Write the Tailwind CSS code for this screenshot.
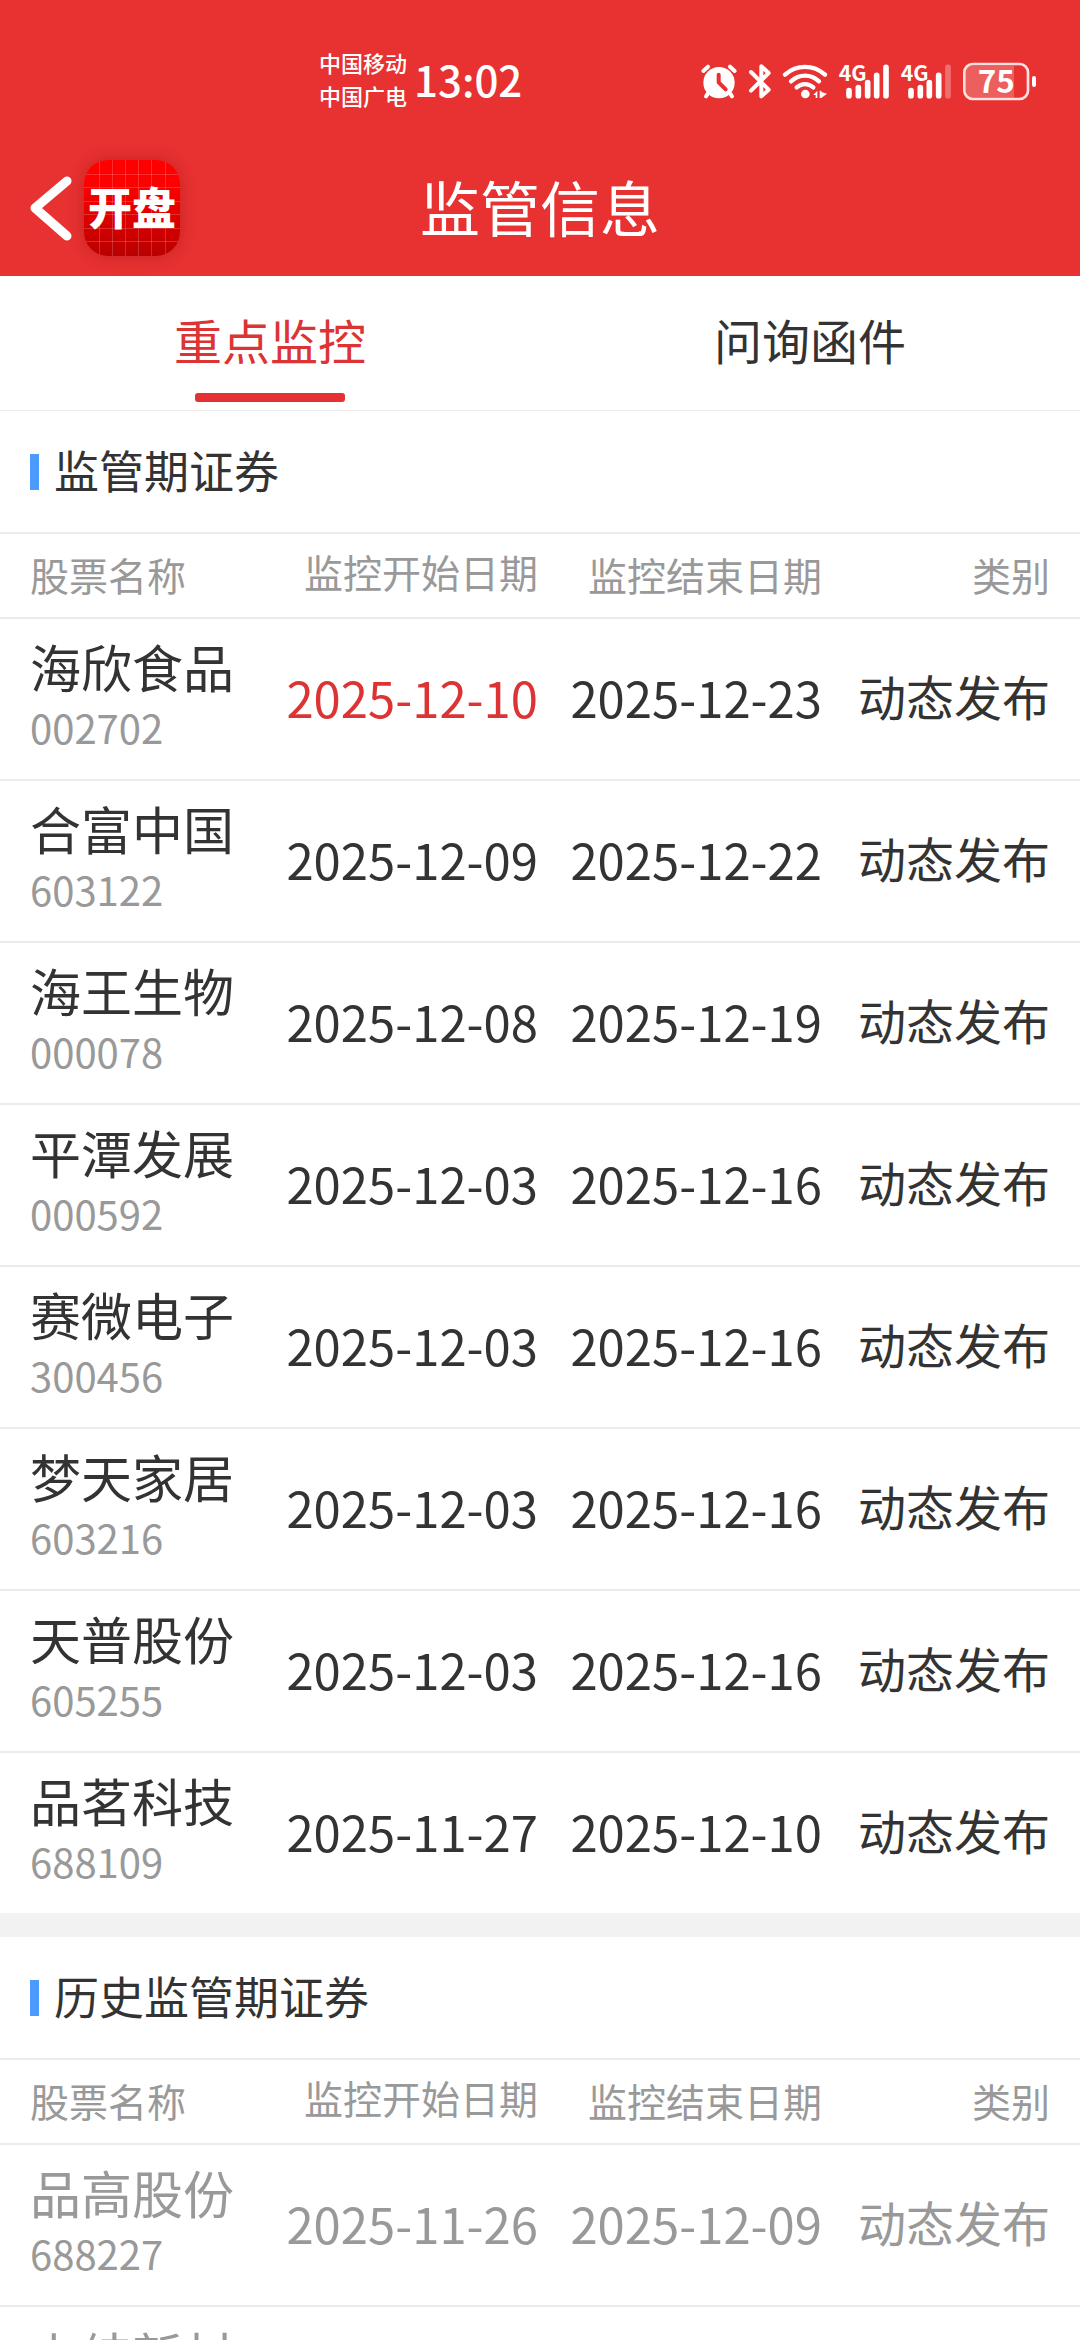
<!DOCTYPE html>
<html lang="zh-CN">
<head>
    <meta charset="UTF-8">
    <meta name="viewport" content="width=device-width, initial-scale=1.0">
    <title>监管信息</title>
    <script src="https://cdn.jsdelivr.net/npm/@tailwindcss/browser@4"></script>
</head>
<body class="bg-white text-[#333333] font-['Noto_Sans_CJK_SC',sans-serif]">
<div class="h-screen flex flex-col overflow-hidden">

    <header class="bg-[#e83131] text-white shrink-0">
        <!-- Status bar -->
        <div class="h-[140px] pt-[22px] pl-[319px] pr-[43px] flex items-center justify-between">
            <div class="flex items-center gap-[7px]">
                <div class="text-[22px] leading-[33px] font-medium pb-1">
                    <p>中国移动</p>
                    <p>中国广电</p>
                </div>
                <span class="text-[42px] leading-[50px] font-medium pb-1">13:02</span>
            </div>
            <div class="flex items-center gap-[10px]">
                <!-- Alarm -->
                <svg class="w-[38px] h-[40px]" viewBox="60 60 114 120" fill="none" stroke="#fff" stroke-linecap="round" stroke-linejoin="round">
                    <circle cx="117" cy="125" r="47" fill="#fff" stroke="none"/>
                    <path d="M70 90 84 77M164 90 150 77" stroke-width="12"/>
                    <path d="M84 157 78 166M150 157 156 166" stroke-width="12"/>
                    <path d="M116 101V124L137 145" stroke="#e83131" stroke-width="12"/>
                </svg>
                <!-- Bluetooth -->
                <svg class="w-[24px] h-[40px]" viewBox="204 60 72 120" fill="none" stroke="#fff" stroke-width="12" stroke-linecap="round" stroke-linejoin="round">
                    <path d="M213 93 266 146 244 166V76L266 96 213 149"/>
                </svg>
                <!-- Wifi -->
                <svg class="w-[46px] h-[40px]" viewBox="306 60 138 120" fill="none" stroke="#fff" stroke-width="13" stroke-linecap="round">
                    <path d="M315 101C350 70 400 70 435 101"/>
                    <path d="M333 121C358 98 392 98 417 121"/>
                    <path d="M350 139C365 126 385 126 400 139"/>
                    <circle cx="376" cy="159" r="13" fill="#fff" stroke="none"/>
                    <path d="M400 162 412 149V171H407V162ZM419 149H424V153L441 158 424 171H419Z" fill="#fff" stroke="none"/>
                </svg>
                <!-- Signal 1 -->
                <svg class="w-[52px] h-[40px] overflow-visible" viewBox="474 60 156 120" fill="none" stroke="#fff" stroke-width="17" stroke-linecap="round">
                    <text class="font-['Liberation_Sans_Narrow','Noto_Sans_CJK_SC',sans-serif]" x="476" y="121" font-size="64" font-weight="600" fill="#fff" stroke="none">4G</text>
                    <path d="M507 149V164M535 140V164M563 125V164M590 103V164M618 79V164"/>
                </svg>
                <!-- Signal 2, last bar off -->
                <svg class="w-[52px] h-[40px] overflow-visible" viewBox="660 60 156 120" fill="none" stroke="#fff" stroke-width="17" stroke-linecap="round">
                    <text class="font-['Liberation_Sans_Narrow','Noto_Sans_CJK_SC',sans-serif]" x="662" y="121" font-size="64" font-weight="600" fill="#fff" stroke="none">4G</text>
                    <path d="M693 149V164M721 140V164M748 125V164M776 103V164"/>
                    <path d="M804 79V164" stroke-opacity=".3"/>
                </svg>
                <!-- Battery -->
                <svg class="w-[75px] h-[40px] overflow-visible" viewBox="846 60 225 120" fill="none">
                    <path d="M874 74H1002V170H874Q857 170 857 152V92Q857 74 874 74Z" fill="#fff" fill-opacity=".22"/>
                    <rect x="853" y="69" width="191" height="105" rx="25" stroke="#fff" stroke-opacity=".85" stroke-width="8"/>
                    <rect x="1056" y="105" width="12" height="33" rx="6" fill="#fff"/>
                    <text x="893" y="157" font-size="94" font-weight="700" fill="#fff">75</text>
                </svg>
            </div>
        </div>

        <!-- Title bar -->
        <div class="h-[136px] grid grid-cols-3 items-center">
            <div class="flex items-center gap-3 pl-6">
                <button type="button" aria-label="返回" class="w-12 h-[72px]">
                    <svg class="w-12 h-[72px]" viewBox="0 0 48 72" fill="none" stroke="#fff" stroke-width="9" stroke-linecap="round" stroke-linejoin="round">
                        <path d="M43 9 11 36 43 64"/>
                    </svg>
                </button>
                <div class="relative size-24 rounded-3xl overflow-hidden bg-linear-to-b from-[#ff0000] from-25% to-[#b80000] shadow-[0_0_16px_rgba(120,0,0,0.3)] flex items-center justify-center">
                    <svg class="absolute inset-0 size-24" viewBox="0 0 96 96" stroke="#fff" stroke-opacity=".18">
                        <path d="M15.500 0V96M28.500 0V96M41.500 0V96M54.500 0V96M67.500 0V96M81.500 0V96M0 14.500H96M0 27.500H96M0 41.500H96M0 54.500H96M0 68.500H96M0 81.500H96"/>
                    </svg>
                    <span class="relative text-[44px] leading-[60px] pb-1 font-black">开盘</span>
                </div>
            </div>
            <h1 class="text-[60px] leading-[80px] text-center pb-1 whitespace-nowrap">监管信息</h1>
        </div>
    </header>

    <!-- Tabs -->
    <nav class="h-[135px] shrink-0 grid grid-cols-2 border-b border-[#ebebeb] text-[48px] leading-[60px]">
        <button type="button" class="flex flex-col items-center justify-between pt-[33px] pb-2 text-[#dc3434]">
            <span>重点监控</span>
            <span class="w-[150px] h-[9px] rounded-[3px] bg-[#e53131]"></span>
        </button>
        <button type="button" class="flex flex-col items-center pt-[33px]">
            <span>问询函件</span>
        </button>
    </nav>

    <main id="list" class="flex-1 min-h-0 overflow-y-auto [scrollbar-width:none]"></main>
</div>

<script>
    const sections = [
        {
            title: '监管期证券',
            rows: [
                ['海欣食品', '002702', '2025-12-10', '2025-12-23', true],
                ['合富中国', '603122', '2025-12-09', '2025-12-22'],
                ['海王生物', '000078', '2025-12-08', '2025-12-19'],
                ['平潭发展', '000592', '2025-12-03', '2025-12-16'],
                ['赛微电子', '300456', '2025-12-03', '2025-12-16'],
                ['梦天家居', '603216', '2025-12-03', '2025-12-16'],
                ['天普股份', '605255', '2025-12-03', '2025-12-16'],
                ['品茗科技', '688109', '2025-11-27', '2025-12-10'],
            ],
        },
        {
            title: '历史监管期证券',
            past: true,
            rows: [
                ['品高股份', '688227', '2025-11-26', '2025-12-09'],
                ['上纬新材', '688585', '2025-11-26', '2025-12-09'],
            ],
        },
    ];

    const row = ([name, code, start, end, isNew]) => `
        <tr class="group">
            <td class="h-[162px] border-b-2 border-[#ebebeb] pl-[30px] pb-1 group-last:h-[160px] group-last:border-b-0">
                <p class="text-[51px] leading-[60px]">${name}</p>
                <p class="text-[40px] leading-[62px] text-[#999999]">${code}</p>
            </td>
            <td class="border-b-2 border-[#ebebeb] pb-1 text-right text-[49px] group-last:border-b-0 ${isNew ? 'text-[#dc3434]' : ''}">${start}</td>
            <td class="border-b-2 border-[#ebebeb] pb-1 text-right text-[49px] group-last:border-b-0">${end}</td>
            <td class="border-b-2 border-[#ebebeb] pb-2 pr-[30px] text-right group-last:border-b-0">动态发布</td>
        </tr>`;

    document.getElementById('list').innerHTML = sections.map((s) => `
        <section class="border-b-24 border-[#f2f2f2] last:border-b-0">
            <h2 class="h-[121px] pl-[30px] flex items-center gap-[15px] text-[45px] leading-[60px]">
                <span class="w-[9px] h-9 bg-[#4a9bfc]"></span>
                <span class="pb-1">${s.title}</span>
            </h2>
            <table class="w-full table-fixed border-separate border-spacing-0 whitespace-nowrap">
                <thead class="text-[39px] leading-[50px] text-[#999999]">
                    <tr>
                        <th class="w-[254px] h-[87px] border-y-2 border-[#ebebeb] pl-[30px] pb-1 text-left font-normal">股票名称</th>
                        <th class="w-[284px] border-y-2 border-[#ebebeb] pb-2.5 text-right font-normal">监控开始日期</th>
                        <th class="w-[284px] border-y-2 border-[#ebebeb] pb-1 text-right font-normal">监控结束日期</th>
                        <th class="border-y-2 border-[#ebebeb] pr-[30px] pb-1 text-right font-normal">类别</th>
                    </tr>
                </thead>
                <tbody class="text-[48px] leading-[60px] ${s.past ? 'text-[#999999]' : 'text-[#333333]'}">
                    ${s.rows.map(row).join('')}
                </tbody>
            </table>
        </section>`).join('');
</script>
</body>
</html>
